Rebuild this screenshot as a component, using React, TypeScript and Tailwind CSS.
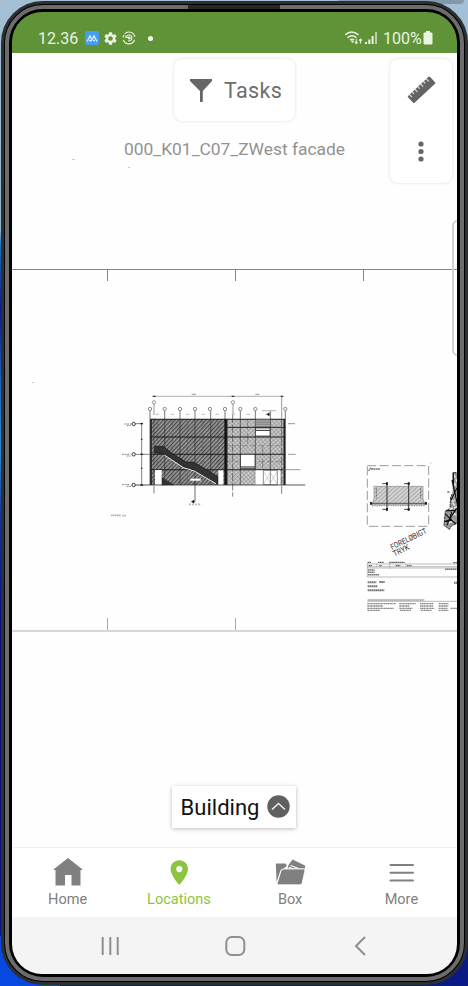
import type { ReactNode } from 'react';

const gridX = [120, 164, 210, 255, 302, 345, 391, 436, 481, 526];
const bubbles = [120, 164, 210, 255, 300, 345, 391, 436, 526];

function Facade() {
  return (
    <g transform="translate(110 385) scale(.33333)" stroke="#222" fill="none">
      <rect x="121" y="102" width="225" height="198" fill="#a0a0a0" stroke="none" />
      <rect x="121" y="102" width="225" height="198" fill="url(#dense)" stroke="none" />
      <rect x="346" y="102" width="180" height="198" fill="#d2d2d2" stroke="none" />
      <rect x="346" y="102" width="180" height="198" fill="url(#light)" stroke="none" />
      <path d="M132 34H516" stroke="#888" strokeWidth="2" />
      <path d="M128 34h9M365 34h8M512 34h8" stroke="#333" strokeWidth="4" />
      <path d="M245 28h13M436 28h12" stroke="#999" strokeWidth="3" />
      <path d="M132 55V90M369 55V90M515 34V98" stroke="#666" strokeWidth="2" />
      <path d="M132 100V325M368 90V335M515 100V330" stroke="#444" strokeWidth="2" strokeDasharray="24 5" />
      {gridX.map((x) => <path key={x} d={`M${x} 76V300`} stroke="#333" strokeWidth="2" />)}
      {bubbles.map((x) => <circle key={x} cx={x} cy="72" r="5" fill="#fff" stroke="#777" strokeWidth="2.5" />)}
      <circle cx="132" cy="52" r="5" fill="#fff" stroke="#666" strokeWidth="2" />
      <circle cx="369" cy="52" r="5" fill="#fff" stroke="#666" strokeWidth="2" />
      <path d="M137 88h10M182 88h10M228 88h10M275 88h10M317 88h10M365 88h10M410 88h10M456 77h43M466 88h14" stroke="#bbb" strokeWidth="3" />
      <path d="M470 88l8-5v10z" fill="#111" />
      <path d="M121 128H346M121 185H346M121 230H346M346 182H526M346 230H526" stroke="#666" strokeWidth="1.5" strokeDasharray="18 7" />
      <path d="M142 104V300M187 104V300M232 104V300M278 104V300M324 104V300M413 104V182M458 182V250" stroke="#555" strokeWidth="1.5" strokeDasharray="30 11" />
      <path d="M121 103H526M121 156H526M121 208H526M121 254H526" stroke="#1c1c1c" strokeWidth="3.2" />
      <path d="M346 127H526" strokeWidth="3" />
      <path d="M123 102V300M350 102V300M523 102V300" stroke="#222" strokeWidth="5" />
      <path d="M346 102V300" stroke="#111" strokeWidth="5" />
      <rect x="436" y="103" width="45" height="22" fill="#aaa" strokeWidth="1" />
      <path d="M438 108h42M438 113h42M438 118h42" stroke="#666" strokeWidth="1.5" />
      <rect x="436" y="129" width="44" height="24" fill="#fff" strokeWidth="2" />
      <path d="M436 136h44" strokeWidth="3" />
      <rect x="392" y="208" width="43" height="43" fill="#fff" strokeWidth="2" />
      <path d="M392 246h43" strokeWidth="3" />
      <path d="M134 184H160L188 207L230 232H252L324 275V298L292 280L249 253L222 246L186 222L160 206L134 203Z" fill="#333" stroke="#111" strokeWidth="2" />
      <path d="M163 210L220 248L253 258L318 296" stroke="#e8e8e8" strokeWidth="3" />
      <path d="M153 275L192 300H153Z" fill="#333" />
      <rect x="135" y="255" width="20" height="45" fill="#fff" stroke="none" />
      <rect x="325" y="256" width="15" height="44" fill="#fff" stroke="none" />
      <rect x="436" y="256" width="75" height="44" fill="#fff" stroke="none" />
      <path d="M460 256h42v43h-42zM481 256v43" stroke="#555" strokeWidth="2" />
      <path d="M460 299L481 262L502 299M460 258l21 37 21-37" stroke="#aaa" strokeWidth="1.5" />
      <path d="M241 284h31" stroke="#fff" strokeWidth="6" />
      <path d="M76 300H586" stroke="#333" strokeWidth="2.5" />
      <path d="M520 254H571M534 208H557M534 116H555" stroke="#666" strokeWidth="2" />
      <path d="M95 116V300M76 116h20M76 208h42" stroke="#444" strokeWidth="2" />
      <path d="M91 116h8M91 208h8M91 300h8M93 163h4M93 250h4" stroke="#222" strokeWidth="4" />
      <path d="M43 117h21M50 122h12M36 208h24M50 213h12M36 299h24M50 304h13" stroke="#777" strokeWidth="2.5" strokeDasharray="6 2" />
      {[117, 208, 300].map((y) => <circle key={y} cx="71" cy={y} r="5" fill="#fff" stroke="#333" strokeWidth="3" />)}
      <path d="M255 290V350H247" strokeWidth="2" />
      <path d="M244 350l8-5v10z" fill="#111" />
      <path d="M237 358h37" stroke="#bbb" strokeWidth="5" strokeDasharray="6 3" />
      <path d="M3 391h29M37 392h12" stroke="#b5b5b5" strokeWidth="5" strokeDasharray="5 1" />
    </g>
  );
}

function TitleBlock() {
  return (
    <g transform="translate(350 450) scale(.33333)" stroke="#333" fill="none">
      <rect x="52" y="47" width="184" height="182" stroke="#888" strokeWidth="2.5" strokeDasharray="27 10" />
      <path d="M56 63l6-10M63 57h28" stroke="#777" strokeWidth="4" strokeDasharray="6 1" />
      <path d="M72 109H219V145L225 165H66L72 145Z" fill="#d5d5d5" stroke="#888" strokeWidth="2" />
      <path d="M72 109H219V145L225 165H66L72 145Z" fill="url(#plan)" stroke="none" />
      <path d="M79 115V145M212 115V145" stroke="#666" strokeWidth="3" strokeDasharray="6 3" />
      <path d="M60 160H230" stroke="#555" strokeWidth="3" />
      <path d="M66 167H225" stroke="#888" strokeWidth="4" strokeDasharray="3 4" />
      <path d="M111 97V182M176 97V182" stroke="#333" strokeWidth="3" />
      <path d="M97 101h17M162 101h17M97 178h17M162 178h17" stroke="#444" strokeWidth="3" />
      <path d="M108 97h6v8h-6zM173 97h6v8h-6zM108 174h6v8h-6zM173 174h6v8h-6zM60 156h6v8h-6zM225 156h6v8h-6z" fill="#222" stroke="none" />
      <g transform="translate(126 300) rotate(-26)" fill="#333" stroke="none" fontFamily="Roboto, sans-serif" fontSize="24">
        <text x="0" y="0" textLength="118" lengthAdjust="spacingAndGlyphs">FORELØBIGT</text>
        <text x="-2" y="21" textLength="52" lengthAdjust="spacingAndGlyphs">TRYK</text>
      </g>
      <path d="M309 68h17v150l-20 8-8 12-16-12 4-43 14-8 2-34 8-15z" fill="#999" stroke="#333" strokeWidth="3" strokeDasharray="9 2" />
      <path d="M312 74l8 18-6 10 10 15-16 12 13 14-15 13 13 16-20 5 18 17-22 5 16 14-18 7" stroke="#f0f0f0" strokeWidth="4" strokeDasharray="10 4" />
      <path d="M298 126h-6M291 226l15-41M306 90l18 80M286 192l32 30M303 150l20-40M288 182h30M300 205l20-30M284 215l22-8M310 70v40" stroke="#111" strokeWidth="3.5" />
      <path d="M238 39h8" stroke="#ccc" strokeWidth="2" />
      <path d="M52 342H323M52 350H323M52 381H323" stroke="#999" strokeWidth="2" />
      <path d="M52 338V381M80 342V350M119 338V356M168 342V350" stroke="#888" strokeWidth="1.5" />
      <path d="M53 337h10M84 337h18M118 337h46M310 338h12M56 347h10M88 347h8M137 347h14M171 347h14" stroke="#666" strokeWidth="4" strokeDasharray="5 1" />
      <path d="M53 354H323" stroke="#777" strokeWidth="1.5" />
      <path d="M54 360h20M54 367h20M54 374h33M285 358h36" stroke="#777" strokeWidth="4.5" strokeDasharray="5 1" />
      <path d="M53 397h26M88 396h16M53 409h30M53 421h50M312 398h10" stroke="#777" strokeWidth="6" strokeDasharray="5 1" />
      <path d="M53 450h170" stroke="#999" strokeWidth="4" strokeDasharray="5 1" />
      <path d="M52 454H323" stroke="#999" strokeWidth="2" />
      <path d="M52 461h85M52 468h47M52 475h79M52 481h38M148 461h49M148 468h31M148 475h39M150 481h33M210 461h41M210 468h40M210 475h43M212 481h33M266 461h30M266 468h30M266 475h27M266 481h30M302 475h20" stroke="#888" strokeWidth="4" strokeDasharray="5 1 3 1" />
    </g>
  );
}

function Drawing() {
  return (
    <svg className="absolute inset-0" width="445" height="794" viewBox="12 53 445 794">
      <defs>
        <pattern id="dense" width="8.5" height="8.5" patternUnits="userSpaceOnUse" patternTransform="rotate(43)">
          <path d="M2 0V8.500" stroke="#3c3c3c" strokeWidth="3.4" />
        </pattern>
        <pattern id="light" width="9" height="9" patternUnits="userSpaceOnUse" patternTransform="rotate(-42)">
          <path d="M0 2H9M2 0V9" stroke="#7d7d7d" strokeWidth="1.7" />
        </pattern>
        <pattern id="plan" width="9" height="9" patternUnits="userSpaceOnUse" patternTransform="rotate(48)">
          <path d="M2 0V9" stroke="#888" strokeWidth="2" />
        </pattern>
      </defs>
      <path d="M12 269.500H457M107.500 269V281M235.500 269V281M363.500 269V281" stroke="#858585" fill="none" />
      <path d="M12 631H457" stroke="#cacaca" strokeWidth="1.600" />
      <path d="M107.500 618V630M235.500 618V630" stroke="#aaa" />
      <path d="M72 159.500h3M128 167.500h2M32 382.500h2" stroke="#ccc" />
      <Facade />
      <TitleBlock />
    </svg>
  );
}

function StatusBar() {
  return (
    <header className="flex h-[41px] shrink-0 items-start bg-[#609338] pl-[26px] pr-6 pt-[16px] text-[#eaf2e2]">
      <span className="mt-px h-5 w-[40px] whitespace-nowrap text-[16px] leading-5">12.36</span>
      <svg className="ml-[7px] mt-[3px]" width="14" height="14" viewBox="0 0 14 14">
        <rect width="14" height="14" rx="3" fill="#479df3" />
        <path d="M2 10.500L5 4.800L7 8.500L9 4.800L12 10.500M4 9.500h3M8 9.500h2" stroke="#d9efff" strokeWidth="1.300" fill="none" />
      </svg>
      <svg className="ml-[5px] mt-[4px]" width="13" height="13" viewBox="2 2 20 20" fill="currentColor">
        <path d="M19.140 12.940c.04-.3.060-.61.060-.94 0-.32-.02-.64-.07-.94l2.030-1.580c.18-.14.23-.41.120-.61l-1.920-3.320c-.12-.22-.37-.29-.59-.22l-2.390.96c-.5-.38-1.030-.7-1.620-.94L14.400 2.810c-.04-.24-.24-.41-.48-.41h-3.840c-.24 0-.43.170-.47.410L9.250 5.350c-.59.240-1.130.57-1.620.94l-2.390-.96c-.22-.08-.47 0-.59.220L2.740 8.870c-.12.210-.08.470.120.610l2.030 1.580c-.05.300-.09.630-.09.940s.02.640.070.940l-2.030 1.580c-.18.140-.23.410-.12.610l1.920 3.320c.12.220.37.290.59.220l2.390-.96c.5.380 1.030.7 1.620.94l.36 2.540c.05.240.24.410.48.410h3.840c.24 0 .44-.17.470-.41l.36-2.540c.59-.24 1.130-.56 1.620-.94l2.390.96c.22.080.47 0 .59-.22l1.920-3.320c.12-.22.070-.47-.12-.61l-2.010-1.580zM12 15.600A3.600 3.600 0 1 1 12 8.400a3.600 3.600 0 0 1 0 7.200z" />
      </svg>
      <svg className="ml-[5px] mt-[3px]" width="14" height="14" viewBox="0 0 14 14" fill="none" stroke="currentColor" strokeWidth="1.100">
        <path d="M2.500 3A6 6 0 0 1 12.800 6M12.600 8.800A6 6 0 0 1 1.300 9M1 6.500L2 4" />
        <path d="M4 6.300A3 3 0 1 1 6 9.800M4 4.500V6.500h2" />
        <circle cx="7.300" cy="7" r=".9" fill="currentColor" />
      </svg>
      <i className="ml-[12px] mt-[8px] size-[5px] rounded-full bg-[#f2f7ed]" />
      <svg className="ml-auto mt-[2px]" width="20" height="16" viewBox="0 0 20 16" fill="none" stroke="currentColor" strokeWidth="1.500">
        <path d="M1.200 4.800Q7.500 -.8 14.500 4.800M3.500 7.700Q8 3.800 12.500 7.700M6 10.300Q8 8.500 10 10.300" />
        <path d="M8.500 13l-1.700-2h3.400z" fill="currentColor" stroke="none" />
        <path d="M12.300 9v4.500M10.900 12L12.300 13.500l1.400-1.500M16.500 13.500V9M15.100 10.500L16.500 9l1.400 1.500" strokeWidth="1.100" />
      </svg>
      <svg className="ml-[1px] mt-[4px]" width="13" height="12" viewBox="0 0 13 12" fill="currentColor">
        <path d="M0 10h2v2H0zM3.300 7.500h2V12h-2zM6.600 4h2v8h-2z" /><path d="M10 0h2v12h-2z" opacity=".65" />
      </svg>
      <span className="ml-[5px] mt-px w-[39px] whitespace-nowrap text-[16px] leading-5">100%</span>
      <svg className="ml-[1px] mt-[3px]" width="10" height="14" viewBox="0 0 10 14" fill="currentColor">
        <path d="M3 0h4v1.500h1.500Q9.500 1.500 9.500 2.500V12q0 1.500-1.500 1.500H2Q.5 13.500.5 12V2.500Q.5 1.500 1.500 1.500H3z" />
      </svg>
    </header>
  );
}

function Ruler() {
  return (
    <svg width="30" height="30" viewBox="0 0 30 30">
      <g transform="rotate(-43 15 15)">
        <rect x=".5" y="10.500" width="30" height="9.500" rx="1" fill="#646464" />
        <path d="M3.500 10v4M7.300 10v3M11.100 10v4M15 10v3M18.900 10v4M22.700 10v3M26.500 10v4" stroke="#e8e8e8" strokeWidth="1.100" />
      </g>
    </svg>
  );
}

function MapView() {
  return (
    <main className="relative flex min-h-0 flex-1 flex-col bg-[#fefefe]">
      <Drawing />
      <i className="absolute right-[-6px] top-[167px] h-[136px] w-[11px] rounded-lg border-2 border-[#d0d1d6]" />
      <div className="relative flex items-start pl-[162px] pr-[5px] pt-[6px]">
        <button className="flex h-[62px] w-[121px] items-center rounded-lg bg-white pl-[16px] shadow-[0_0_3px_#d9d9d9]">
          <svg width="22" height="23" viewBox="0 0 22 23"><path d="M0 0H22V2L12.800 12V23H10V12L0 2z" fill="#666" /></svg>
          <span className="ml-[12px] mt-[2px] text-[21.500px] leading-7 tracking-[.35px] text-[#6e6e6e]">Tasks</span>
        </button>
        <div className="ml-auto flex h-[124px] w-[62px] flex-col items-center rounded-lg bg-white pt-[16px] shadow-[0_0_3px_#d9d9d9]">
          <Ruler />
          <svg className="mt-[36px]" width="6" height="22" viewBox="0 0 6 22" fill="#666">
            <circle cx="3" cy="3" r="2.600" /><circle cx="3" cy="10.500" r="2.600" /><circle cx="3" cy="18" r="2.600" />
          </svg>
        </div>
      </div>
      <p className="relative -mt-[46px] ml-[112px] w-[240px] whitespace-nowrap text-[17.400px] leading-6 text-[#929292]">000_K01_C07_ZWest facade</p>
      <button className="relative mb-[19px] ml-[160px] mt-auto flex h-[42px] w-[124px] items-center bg-white pl-[8px] shadow-[0_1px_4px_#bbb]">
        <span className="mt-[2px] w-[80px] whitespace-nowrap text-[22px] leading-7 text-[#111]">Building</span>
        <svg className="-mt-px ml-[7px]" width="23" height="23" viewBox="0 0 23 23">
          <circle cx="11.500" cy="11.500" r="11.200" fill="#606060" />
          <path d="M5 14.500l6.500-6 6.500 6" fill="none" stroke="#eee" strokeWidth="1.600" />
        </svg>
      </button>
    </main>
  );
}

function Tab({ label, active, children }: { label: string; active?: boolean; children: ReactNode }) {
  return (
    <button className={`flex flex-1 flex-col items-center pt-[10px] ${active ? 'text-[#8bc53f]' : 'text-[#808080]'}`}>
      <svg width="30" height="30" viewBox="0 0 30 30" fill="currentColor">{children}</svg>
      <span className="mt-[2px] text-[14.500px] leading-5">{label}</span>
    </button>
  );
}

function TabBar() {
  return (
    <nav className="flex h-[70px] shrink-0 border-t border-[#eeeef0] bg-white">
      <Tab label="Home"><path d="M15 0L29 11V12H27.500V27.500H18.500V17H12V27.500H2.500V12H1V11z" /></Tab>
      <Tab label="Locations" active>
        <path fillRule="evenodd" d="M15.300 2.300c-5 0-8.700 3.800-8.700 8.700C6.600 17.500 15.300 27 15.300 27s8.700-9.500 8.700-16c0-4.900-3.700-8.700-8.700-8.700zm0 5.700a3.100 3.100 0 1 1 0 6.200 3.100 3.100 0 0 1 0-6.200z" />
      </Tab>
      <Tab label="Box">
        <path d="M.8 6.500q0-1 1-1H10.500l1.500 2L9 10.500Q6.500 10.500 5.500 12.500L1.600 24z" />
        <path d="M13.500 7l4-5.500L30 7.500v3H12.500z" />
        <path d="M15.500 7.500l8 3M13.800 9.300l4 1.500" stroke="#fff" strokeWidth="1.100" />
        <path d="M9 11H28.700q1.600 0 1.200 1.500L27.200 25q-.4 1.800-2.300 1.800H3.400q-1.600 0-1.200-1.600L6 13Q6.700 11 9 11z" stroke="#fff" strokeWidth=".8" />
      </Tab>
      <Tab label="More"><path d="M4.500 7h22.500M4.500 14.800h22.500M4.500 22.500h22.500" stroke="currentColor" strokeWidth="2" strokeLinecap="round" /></Tab>
    </nav>
  );
}

function SystemNav() {
  return (
    <footer className="flex h-[57px] shrink-0 items-center justify-between bg-[#f4f4f4] pl-[88px] pr-[86px] pt-px">
      {['recents', 'home', 'back'].map((key) => (
        <svg key={key} width="22" height="22" viewBox="0 0 22 22" fill="none" stroke="#8f8f8f" strokeWidth="2">
          {key === 'recents' && <path d="M2.700 2V20M10.300 2V20M17.700 2V20" />}
          {key === 'home' && <rect x="1.300" y="2" width="18" height="18" rx="5.500" />}
          {key === 'back' && <path d="M16 2L7 11L16 20" />}
        </svg>
      ))}
    </footer>
  );
}

export default function App() {
  return (
    <div className="relative h-[986px] w-[468px] overflow-hidden bg-[linear-gradient(180deg,#a4c0d6_0,#8fb4cf_230px,#1a72bd_245px,#0a1a86_310px,#1b62bb_380px,#2d8bd2_450px,#10339c_520px,#061079_620px,#0a1476_850px,#0a1a86_986px)] pl-px pt-px font-[Roboto,sans-serif]">
      <i className="absolute bottom-0 left-0 h-[50px] w-[60px] bg-[#0747e2]" />
      <i className="absolute left-[338px] top-0 h-[4px] w-[126px] rounded-b bg-[#8299ab]" />
      <div className="relative h-[984px] w-[467px] rounded-[42px] border-[3px] border-[#2c3033] bg-black p-px">
        <div className="h-full w-full rounded-[38px] border-4 border-[#6c6c6c] bg-black p-[3px]">
          <div className="flex h-full w-full flex-col overflow-hidden rounded-[30px]">
            <StatusBar />
            <MapView />
            <TabBar />
            <SystemNav />
          </div>
        </div>
        <i className="absolute left-[184px] top-px h-[4px] w-[92px] bg-[#25282b]" />
      </div>
    </div>
  );
}
